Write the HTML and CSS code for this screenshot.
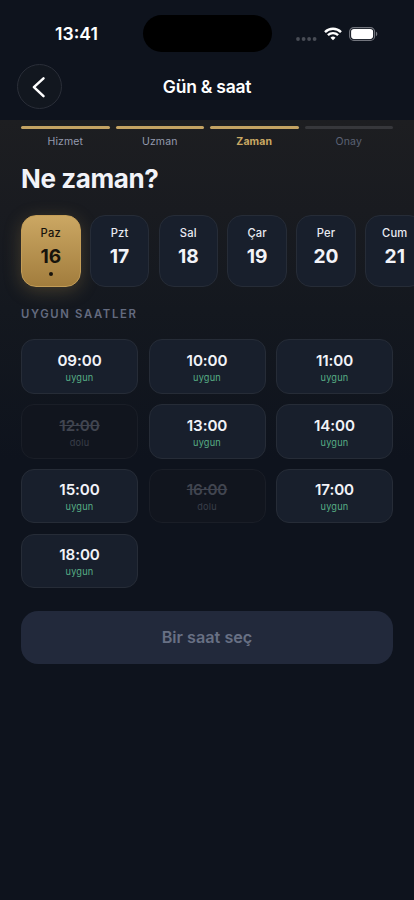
FILE: index.html
```html
<!DOCTYPE html>
<html lang="tr">
<head>
<meta charset="utf-8">
<meta name="viewport" content="width=device-width, initial-scale=1">
<title>Gün &amp; saat</title>
<link rel="stylesheet" href="styles.css">
</head>
<body>
<div class="statusbar">
  <div class="clock">13:41</div>
  <div class="island"></div>
  <div class="indicators">
    <svg class="dots" width="21" height="4" viewBox="0 0 21 4"><circle cx="2" cy="2" r="1.9"/><circle cx="7.6" cy="2" r="1.9"/><circle cx="13.1" cy="2" r="1.9"/><circle cx="18.6" cy="2" r="1.9"/></svg>
    <svg class="wifi" width="18" height="14" viewBox="0 0 18 14" fill="none" stroke="#fff" stroke-width="2.4"><path d="M1 5.1a11.4 11.4 0 0 1 16 0"/><path d="M3.9 8.2a7.3 7.3 0 0 1 10.2 0"/><path d="M9 13.2 6.5 10.7a3.6 3.6 0 0 1 5 0z" fill="#fff" stroke="none"/></svg>
    <svg class="battery" width="29" height="14" viewBox="0 0 29 14"><rect x=".6" y=".6" width="25" height="12.8" rx="4.2" fill="none" stroke="#72757d" stroke-width="1.1"/><rect x="2.1" y="2.1" width="22" height="9.8" rx="2.8" fill="#fff"/><path d="M27 4.8c1.7.6 1.7 3.8 0 4.4z" fill="#72757d"/></svg>
  </div>
</div>
<header class="navbar">
  <button class="back" aria-label="Geri"><svg width="46" height="46" viewBox="0 0 46 46" fill="none" stroke="#fff" stroke-width="2.5" stroke-linecap="round" stroke-linejoin="round"><path d="M26.5 14.4 16.9 23.2 26.5 32.2"/></svg></button>
  <h1>Gün &amp; saat</h1>
</header>
<main>
  <ol class="steps">
    <li class="done">Hizmet</li>
    <li class="done">Uzman</li>
    <li class="done current">Zaman</li>
    <li class="next">Onay</li>
  </ol>
  <h2>Ne zaman?</h2>
  <div class="days">
    <div class="day selected"><span>Paz</span><b>16</b><i></i></div>
    <div class="day"><span>Pzt</span><b>17</b></div>
    <div class="day"><span>Sal</span><b>18</b></div>
    <div class="day"><span>Çar</span><b>19</b></div>
    <div class="day"><span>Per</span><b>20</b></div>
    <div class="day"><span>Cum</span><b>21</b></div>
  </div>
  <h3>UYGUN SAATLER</h3>
  <div class="slots">
    <div class="slot"><b>09:00</b><span>uygun</span></div>
    <div class="slot"><b>10:00</b><span>uygun</span></div>
    <div class="slot"><b>11:00</b><span>uygun</span></div>
    <div class="slot full"><b>12:00</b><span>dolu</span></div>
    <div class="slot"><b>13:00</b><span>uygun</span></div>
    <div class="slot"><b>14:00</b><span>uygun</span></div>
    <div class="slot"><b>15:00</b><span>uygun</span></div>
    <div class="slot full"><b>16:00</b><span>dolu</span></div>
    <div class="slot"><b>17:00</b><span>uygun</span></div>
    <div class="slot"><b>18:00</b><span>uygun</span></div>
  </div>
  <button class="submit" disabled>Bir saat seç</button>
</main>
</body>
</html>
```
FILE: styles.css
```css
* { box-sizing: border-box; }
body {
  margin: 0;
  height: 900px;
  overflow: hidden;
  background: #0e131d;
  color: #f2f3f8;
  font-family: Inter, "Liberation Sans", sans-serif;
}
h1, h2, h3, ol { margin: 0; padding: 0; }
button { font-family: inherit; padding: 0; }

.statusbar {
  height: 64px;
  padding: 15px 36px 0 55px;
  display: grid;
  grid-template-columns: 87.5px 129px 1fr;
  align-items: start;
}
.clock { padding-top: 8px; font-size: 17.6px; line-height: 22px; font-weight: 600; color: #fff; }
.island { height: 37px; border-radius: 19px; background: #000; }
.indicators { display: flex; justify-content: flex-end; align-items: center; padding-top: 12px; }
.dots { fill: #484c55; margin: 9px 7px 0 0; }
.wifi { margin-right: 7px; }

.navbar {
  height: 56px;
  padding: 0 17px;
  display: grid;
  grid-template-columns: 46px 1fr 46px;
}
.back {
  width: 45px;
  height: 45px;
  border: 1px solid #2a2e38;
  border-radius: 50%;
  background: #12171f;
  display: flex;
  align-items: center;
  justify-content: center;
}
.back svg { flex: none; }
h1 { font-size: 17.5px; line-height: 46px; font-weight: 600; letter-spacing: -.25px; text-align: center; color: #fff; }

main {
  height: 780px;
  padding: 6px 21px 0;
  background: linear-gradient(#1d1e21, #191b20 90px, #14181f 190px, #0e131d 340px);
}
.steps { list-style: none; display: grid; grid-template-columns: repeat(4, 1fr); gap: 6px; }
.steps li {
  font-size: 10.5px;
  line-height: 14px;
  letter-spacing: .1px;
  text-align: center;
  color: #949baf;
}
.steps li::before {
  content: "";
  display: block;
  height: 3px;
  margin-bottom: 6px;
  border-radius: 2px;
  background: #36373b;
}
.steps .done::before { background: #c4a363; }
.steps .current { color: #c9a863; font-weight: 700; }
.steps .next { color: #5b6274; }

h2 { margin-top: 12px; font-size: 26px; line-height: 36px; font-weight: 700; letter-spacing: -.4px; }

.days { display: flex; gap: 9.3px; margin: 17.5px -21px 0 0; }
.day {
  flex: 0 0 59.5px;
  height: 72px;
  padding-top: 9px;
  border: 1px solid #262c37;
  border-radius: 15px;
  background: #181f2c;
  display: flex;
  flex-direction: column;
  align-items: center;
}
.day span { font-size: 11.2px; line-height: 16px; font-weight: 500; letter-spacing: .2px; color: #e9ebf2; }
.day b { margin-top: 2px; font-size: 19.2px; line-height: 26px; font-weight: 700; }
.day i { width: 4px; height: 4px; margin-top: 3px; border-radius: 50%; background: #17130c; }
.selected {
  border-color: #c39d57;
  background: linear-gradient(#cba763, #a27d3d);
  box-shadow: 0 4px 18px rgba(196, 158, 83, .26);
}
.day.selected span, .selected b { color: #17130c; }

h3 { margin-top: 18.5px; font-size: 11.3px; line-height: 18px; font-weight: 600; letter-spacing: 1.65px; color: #646b7f; }

.slots { display: grid; grid-template-columns: repeat(3, 1fr); gap: 10.5px; margin-top: 16.3px; }
.slot {
  height: 54.4px;
  padding-top: 10.4px;
  border: 1px solid #262c37;
  border-radius: 13px;
  background: #181f2c;
  display: flex;
  flex-direction: column;
  align-items: center;
}
.slot b { font-size: 15.2px; line-height: 20px; font-weight: 600; letter-spacing: -.1px; }
.slot span { font-size: 9.2px; line-height: 13px; letter-spacing: .2px; color: #57ad85; }
.full { border-color: #1a1e27; background: #11151e; }
.full b { color: #414550; text-decoration: line-through; }
.slot.full span { color: #393e49; }

.submit {
  display: block;
  width: 100%;
  height: 52.5px;
  margin-top: 22.7px;
  border: 0;
  border-radius: 17px;
  background: #22293b;
  color: #687084;
  font-size: 16.2px;
  font-weight: 600;
}
```
